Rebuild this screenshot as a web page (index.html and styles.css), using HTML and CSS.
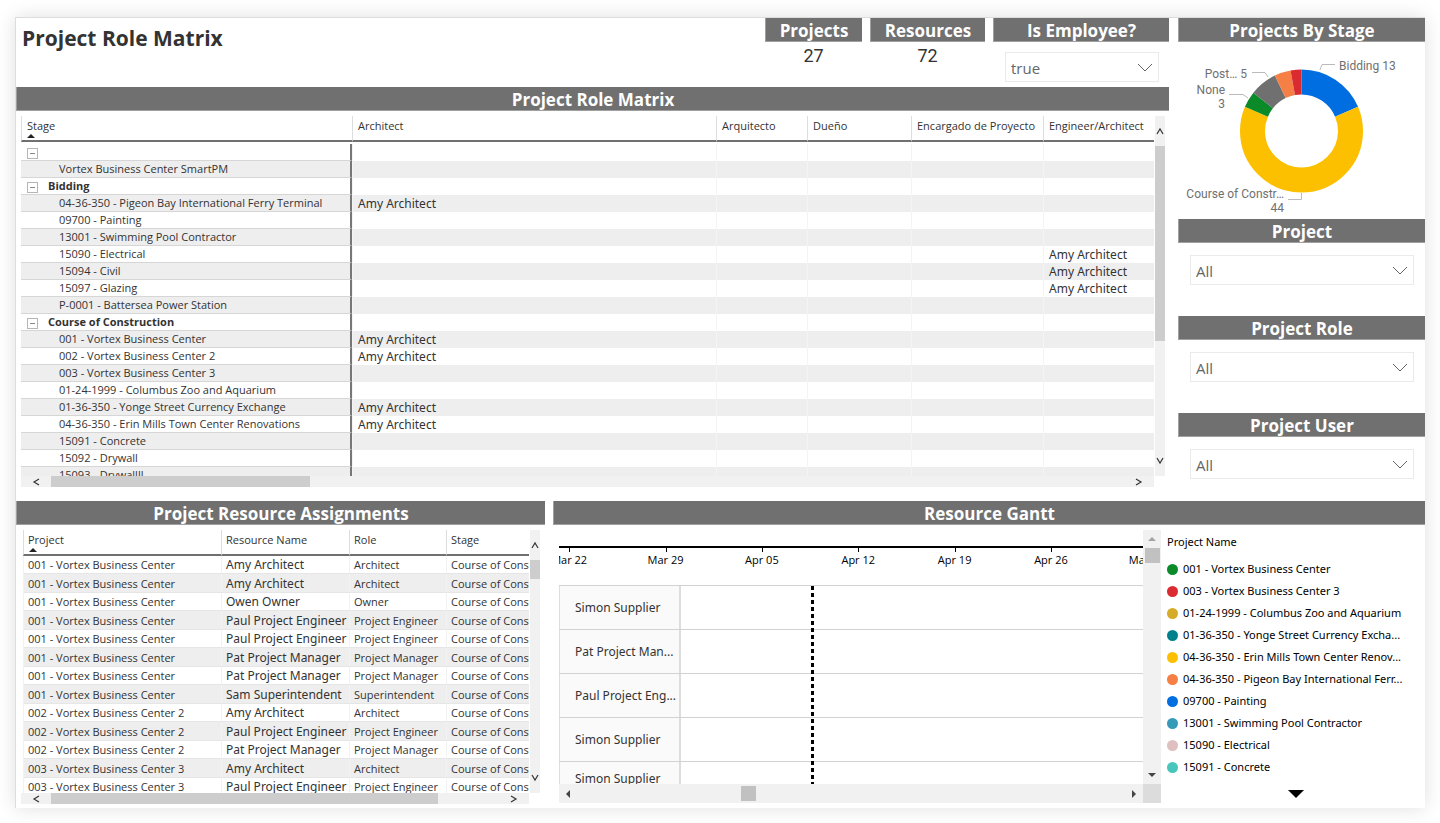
FILE: index.html
```
<!DOCTYPE html>
<html lang="en">
<head>
<meta charset="utf-8">
<title>Project Role Matrix</title>
<link rel="stylesheet" href="styles.css">
</head>
<body>
<main class="dashboard">
  <section class="upper">
    <div class="primary">
      <header class="topbar">
        <h1 class="page-title">Project Role Matrix</h1>
        <div class="kpi kpi-projects"><h2 class="bar">Projects</h2><p class="kpi-value">27</p></div>
        <div class="kpi kpi-resources"><h2 class="bar">Resources</h2><p class="kpi-value">72</p></div>
        <div class="kpi kpi-employee">
          <h2 class="bar"><label for="employee">Is Employee?</label></h2>
          <div class="picker"><select id="employee"><option>true</option><option>false</option></select><svg viewBox="0 0 16 9"><path d="M1 1l7 7 7-7"/></svg></div>
        </div>
      </header>
      <section class="matrix">
        <h2 class="bar">Project Role Matrix</h2>
        <div class="pane matrix-pane">
          <div class="clip">
            <table class="matrix-table">
              <colgroup><col class="m-stage"><col><col class="m-arq"><col class="m-due"><col class="m-enc"><col class="m-eng"></colgroup>
              <thead><tr><th>Stage<svg class="sort" viewBox="0 0 8 4"><path d="M0 4L4 0l4 4z"/></svg></th><th>Architect</th><th>Arquitecto</th><th>Dueño</th><th>Encargado de Proyecto</th><th>Engineer/Architect</th></tr></thead>
              <tbody>
                <tr class="group"><th><button class="toggle" aria-label="Collapse"></button></th><td></td><td></td><td></td><td></td><td></td></tr>
                <tr><th>Vortex Business Center SmartPM</th><td></td><td></td><td></td><td></td><td></td></tr>
                <tr class="group"><th><button class="toggle" aria-label="Collapse Bidding"></button>Bidding</th><td></td><td></td><td></td><td></td><td></td></tr>
                <tr><th>04-36-350 - Pigeon Bay International Ferry Terminal</th><td>Amy Architect</td><td></td><td></td><td></td><td></td></tr>
                <tr><th>09700 - Painting</th><td></td><td></td><td></td><td></td><td></td></tr>
                <tr><th>13001 - Swimming Pool Contractor</th><td></td><td></td><td></td><td></td><td></td></tr>
                <tr><th>15090 - Electrical</th><td></td><td></td><td></td><td></td><td>Amy Architect</td></tr>
                <tr><th>15094 - Civil</th><td></td><td></td><td></td><td></td><td>Amy Architect</td></tr>
                <tr><th>15097 - Glazing</th><td></td><td></td><td></td><td></td><td>Amy Architect</td></tr>
                <tr><th>P-0001 - Battersea Power Station</th><td></td><td></td><td></td><td></td><td></td></tr>
                <tr class="group"><th><button class="toggle" aria-label="Collapse Course of Construction"></button>Course of Construction</th><td></td><td></td><td></td><td></td><td></td></tr>
                <tr><th>001 - Vortex Business Center</th><td>Amy Architect</td><td></td><td></td><td></td><td></td></tr>
                <tr><th>002 - Vortex Business Center 2</th><td>Amy Architect</td><td></td><td></td><td></td><td></td></tr>
                <tr><th>003 - Vortex Business Center 3</th><td></td><td></td><td></td><td></td><td></td></tr>
                <tr><th>01-24-1999 - Columbus Zoo and Aquarium</th><td></td><td></td><td></td><td></td><td></td></tr>
                <tr><th>01-36-350 - Yonge Street Currency Exchange</th><td>Amy Architect</td><td></td><td></td><td></td><td></td></tr>
                <tr><th>04-36-350 - Erin Mills Town Center Renovations</th><td>Amy Architect</td><td></td><td></td><td></td><td></td></tr>
                <tr><th>15091 - Concrete</th><td></td><td></td><td></td><td></td><td></td></tr>
                <tr><th>15092 - Drywall</th><td></td><td></td><td></td><td></td><td></td></tr>
                <tr><th>15093 - Drywallll</th><td></td><td></td><td></td><td></td><td></td></tr>
              </tbody>
            </table>
          </div>
          <div class="vscroll">
            <button aria-label="Scroll up"><svg viewBox="0 0 8 8"><path d="M1 7l3-5 3 5"/></svg></button>
            <span class="thumb"></span>
            <button class="end" aria-label="Scroll down"><svg viewBox="0 0 8 8"><path d="M1 1l3 5 3-5"/></svg></button>
          </div>
          <div class="hscroll">
            <button aria-label="Scroll left"><svg viewBox="0 0 8 8"><path d="M7 1L2 4l5 3"/></svg></button>
            <span class="thumb"></span>
            <button class="end" aria-label="Scroll right"><svg viewBox="0 0 8 8"><path d="M1 1l5 3-5 3"/></svg></button>
          </div>
        </div>
      </section>
    </div>
    <aside class="sidebar">
      <section>
        <h2 class="bar">Projects By Stage</h2>
        <svg class="donut" viewBox="0 0 247 177" role="img" aria-label="Projects by stage">
          <g class="slices" transform="rotate(-90 123.5 89)">
            <circle class="blue" cx="123.5" cy="89" r="49" pathLength="70" stroke-dasharray="13 57"/>
            <circle class="yellow" cx="123.5" cy="89" r="49" pathLength="70" stroke-dasharray="44 26" stroke-dashoffset="-13"/>
            <circle class="green" cx="123.5" cy="89" r="49" pathLength="70" stroke-dasharray="3 67" stroke-dashoffset="-57"/>
            <circle class="grey" cx="123.5" cy="89" r="49" pathLength="70" stroke-dasharray="5 65" stroke-dashoffset="-60"/>
            <circle class="orange" cx="123.5" cy="89" r="49" pathLength="70" stroke-dasharray="3 67" stroke-dashoffset="-65"/>
            <circle class="red" cx="123.5" cy="89" r="49" pathLength="70" stroke-dasharray="2 68" stroke-dashoffset="-68"/>
          </g>
          <path class="leader" d="M142 28l2-5.500h13M90 35l-3-4.500H74M70 56l-5-3.500H51M123.500 151v6.500H110"/>
          <text x="161" y="28">Bidding 13</text>
          <g text-anchor="end">
            <text x="69" y="36">Post… 5</text>
            <text x="47" y="52">None</text><text x="47" y="66">3</text>
            <text x="106" y="156">Course of Constr…</text><text x="106" y="170">44</text>
          </g>
        </svg>
      </section>
      <section class="filter"><h2 class="bar"><label for="project">Project</label></h2><div class="picker"><select id="project"><option>All</option></select><svg viewBox="0 0 16 9"><path d="M1 1l7 7 7-7"/></svg></div></section>
      <section class="filter"><h2 class="bar"><label for="role">Project Role</label></h2><div class="picker"><select id="role"><option>All</option></select><svg viewBox="0 0 16 9"><path d="M1 1l7 7 7-7"/></svg></div></section>
      <section class="filter"><h2 class="bar"><label for="user">Project User</label></h2><div class="picker"><select id="user"><option>All</option></select><svg viewBox="0 0 16 9"><path d="M1 1l7 7 7-7"/></svg></div></section>
    </aside>
  </section>

  <section class="lower">
    <section class="assignments">
      <h2 class="bar">Project Resource Assignments</h2>
      <div class="pane assign-pane">
        <div class="clip">
          <table class="assign-table">
            <colgroup><col class="a-project"><col class="a-name"><col class="a-role"><col></colgroup>
            <thead><tr><th>Project<svg class="sort" viewBox="0 0 8 4"><path d="M0 4L4 0l4 4z"/></svg></th><th>Resource Name</th><th>Role</th><th>Stage</th></tr></thead>
            <tbody>
              <tr><td>001 - Vortex Business Center</td><td>Amy Architect</td><td>Architect</td><td>Course of Construction</td></tr>
              <tr><td>001 - Vortex Business Center</td><td>Amy Architect</td><td>Architect</td><td>Course of Construction</td></tr>
              <tr><td>001 - Vortex Business Center</td><td>Owen Owner</td><td>Owner</td><td>Course of Construction</td></tr>
              <tr><td>001 - Vortex Business Center</td><td>Paul Project Engineer</td><td>Project Engineer</td><td>Course of Construction</td></tr>
              <tr><td>001 - Vortex Business Center</td><td>Paul Project Engineer</td><td>Project Engineer</td><td>Course of Construction</td></tr>
              <tr><td>001 - Vortex Business Center</td><td>Pat Project Manager</td><td>Project Manager</td><td>Course of Construction</td></tr>
              <tr><td>001 - Vortex Business Center</td><td>Pat Project Manager</td><td>Project Manager</td><td>Course of Construction</td></tr>
              <tr><td>001 - Vortex Business Center</td><td>Sam Superintendent</td><td>Superintendent</td><td>Course of Construction</td></tr>
              <tr><td>002 - Vortex Business Center 2</td><td>Amy Architect</td><td>Architect</td><td>Course of Construction</td></tr>
              <tr><td>002 - Vortex Business Center 2</td><td>Paul Project Engineer</td><td>Project Engineer</td><td>Course of Construction</td></tr>
              <tr><td>002 - Vortex Business Center 2</td><td>Pat Project Manager</td><td>Project Manager</td><td>Course of Construction</td></tr>
              <tr><td>003 - Vortex Business Center 3</td><td>Amy Architect</td><td>Architect</td><td>Course of Construction</td></tr>
              <tr><td>003 - Vortex Business Center 3</td><td>Paul Project Engineer</td><td>Project Engineer</td><td>Course of Construction</td></tr>
            </tbody>
          </table>
        </div>
        <div class="vscroll">
          <button aria-label="Scroll up"><svg viewBox="0 0 8 8"><path d="M1 7l3-5 3 5"/></svg></button>
          <span class="thumb"></span>
          <button class="end" aria-label="Scroll down"><svg viewBox="0 0 8 8"><path d="M1 1l3 5 3-5"/></svg></button>
        </div>
        <div class="hscroll">
          <button aria-label="Scroll left"><svg viewBox="0 0 8 8"><path d="M7 1L2 4l5 3"/></svg></button>
          <span class="thumb"></span>
          <button class="end" aria-label="Scroll right"><svg viewBox="0 0 8 8"><path d="M1 1l5 3-5 3"/></svg></button>
        </div>
      </div>
    </section>

    <section class="gantt">
      <h2 class="bar">Resource Gantt</h2>
      <div class="gantt-body">
        <div class="gantt-pane">
          <div class="clip chart">
            <div class="axis"><span>Mar 22</span><span>Mar 29</span><span>Apr 05</span><span>Apr 12</span><span>Apr 19</span><span>Apr 26</span><span>May 03</span></div>
            <div class="lanes">
              <div class="lane"><span>Simon Supplier</span></div>
              <div class="lane"><span>Pat Project Man...</span></div>
              <div class="lane"><span>Paul Project Eng...</span></div>
              <div class="lane"><span>Simon Supplier</span></div>
              <div class="lane short"><span>Simon Supplier</span></div>
              <svg class="today" aria-hidden="true"><line x1="1.500" y1="1" x2="1.500" y2="400"/></svg>
            </div>
          </div>
          <div class="vscroll solid">
            <button class="dim" aria-label="Scroll up"><svg viewBox="0 0 8 8"><path d="M0 6l4-4 4 4z"/></svg></button>
            <span class="thumb"></span>
            <button class="end" aria-label="Scroll down"><svg viewBox="0 0 8 8"><path d="M0 2l4 4 4-4z"/></svg></button>
          </div>
          <div class="hscroll solid">
            <button aria-label="Scroll left"><svg viewBox="0 0 8 8"><path d="M6 0L2 4l4 4z"/></svg></button>
            <span class="thumb"></span>
            <button class="end" aria-label="Scroll right"><svg viewBox="0 0 8 8"><path d="M2 0l4 4-4 4z"/></svg></button>
          </div>
          <div class="corner"></div>
        </div>
        <div class="legend">
          <h3>Project Name</h3>
          <ul>
            <li><i class="c-green"></i>001 - Vortex Business Center</li>
            <li><i class="c-red"></i>003 - Vortex Business Center 3</li>
            <li><i class="c-gold"></i>01-24-1999 - Columbus Zoo and Aquarium</li>
            <li><i class="c-teal"></i>01-36-350 - Yonge Street Currency Excha...</li>
            <li><i class="c-yellow"></i>04-36-350 - Erin Mills Town Center Renov...</li>
            <li><i class="c-orange"></i>04-36-350 - Pigeon Bay International Ferr...</li>
            <li><i class="c-blue"></i>09700 - Painting</li>
            <li><i class="c-sky"></i>13001 - Swimming Pool Contractor</li>
            <li><i class="c-pink"></i>15090 - Electrical</li>
            <li><i class="c-aqua"></i>15091 - Concrete</li>
          </ul>
          <button class="more" aria-label="More projects"><svg viewBox="0 0 16 8"><path d="M0 0h16L8 8z"/></svg></button>
        </div>
      </div>
    </section>
  </section>
</main>
</body>
</html>
```
FILE: styles.css
```
* { box-sizing: border-box; }
body { margin: 0; background: #fff; color: #333; font-family: "Open Sans", "Noto Sans", sans-serif; font-size: 11px; line-height: 16px; }
h1, h2, h3, p, ul { margin: 0; padding: 0; }
ul { list-style: none; }
button { display: flex; align-items: center; justify-content: center; padding: 0; border: 0; background: none; }

.dashboard { margin: 17px 15px 15px; padding-bottom: 4px; border: 1px solid #ddd; border-right: 0; border-bottom: 0; background: #fff; box-shadow: 0 0 18px rgba(0, 0, 0, 0.13); }
.bar { height: 24px; border-left: 1px solid #a0a0a0; border-bottom: 1px solid #a0a0a0; background: #707070; color: #fff; font-size: 17px; font-weight: 700; line-height: 25px; text-align: center; white-space: nowrap; }

.upper { display: grid; grid-template-columns: minmax(0, 1fr) 247px; column-gap: 9px; }
.topbar { display: flex; gap: 8px; height: 69px; }
.page-title { flex: 1; padding: 3px 6px; font-size: 21px; line-height: 34px; font-weight: 700; color: #333; }
.kpi-projects { width: 97px; }
.kpi-resources { width: 115px; }
.kpi-employee { width: 176px; }
.kpi-value { padding-top: 2px; font-family: Roboto, sans-serif; font-size: 18px; line-height: 24px; text-align: center; }
.kpi-employee .picker { margin: 10px 10px 0 12px; }

.picker { display: grid; height: 30px; }
.picker select, .picker svg { grid-area: 1 / 1; }
.picker select { width: 100%; padding: 2px 5px 0; border: 1px solid #eaeaea; border-radius: 0; background: #fff; appearance: none; color: #666; font-family: inherit; font-size: 15px; }
.picker svg { width: 16px; height: 9px; margin-right: 6px; place-self: center end; fill: none; stroke: #666; pointer-events: none; }

.pane { display: grid; grid-template-columns: minmax(0, 1fr) 10px; column-gap: 1px; padding: 5px 4px 0 5px; }
.matrix-pane { grid-template-rows: 360px 11px; }
.clip { overflow: hidden; }
table { width: 100%; table-layout: fixed; border-collapse: separate; border-spacing: 0; }
th, td { overflow: hidden; padding: 0 5px; font-weight: 400; text-align: left; white-space: nowrap; }
thead th { position: relative; border-left: 1px solid #ddd; border-bottom: 2px solid #707070; vertical-align: top; }
.sort { position: absolute; left: 5px; bottom: 2px; width: 8px; height: 4px; fill: #222; }

.m-stage { width: 331px; }
.m-arq { width: 91px; }
.m-due { width: 104px; }
.m-enc { width: 132px; }
.m-eng { width: 111px; }
.matrix-table thead th { height: 26px; padding-top: 2px; }
.matrix-table tbody::before { display: table-row; height: 2px; content: ""; }
.matrix-table tbody th, .matrix-table tbody td { height: 17px; line-height: 16px; }
.matrix-table tbody th { padding-left: 38px; border-right: 2px solid #777; border-bottom: 1px solid #d6d6d6; }
.matrix-table tbody td { border-left: 1px solid #f4f4f4; font-family: "Noto Sans", sans-serif; font-size: 12px; }
.matrix-table tbody tr:nth-child(even) { background: #eee; }
.matrix-table .group th { padding-left: 6px; font-weight: 700; }
.toggle { position: relative; display: inline-block; width: 11px; height: 11px; margin: 4px 10px 0 0; border: 1px solid #b5b5b5; vertical-align: top; }
.toggle::before { position: absolute; top: 4px; left: 2px; width: 5px; height: 1px; background: #888; content: ""; }

.vscroll { display: flex; flex-direction: column; background: #f1f1f1; }
.hscroll { display: flex; background: #f1f1f1; }
.vscroll button { height: 30px; }
.hscroll button { width: 30px; }
.vscroll svg, .hscroll svg { width: 8px; height: 8px; fill: none; stroke: #333; stroke-width: 1.200; }
.thumb { background: #cdcdcd; }
.vscroll .end { margin-top: auto; }
.hscroll .end { margin-left: auto; }
.matrix-pane .vscroll .thumb { height: 195px; }
.matrix-pane .hscroll .thumb { width: 259px; }

.donut { display: block; width: 100%; height: 177px; }
.donut text { fill: #707070; font-family: Roboto, sans-serif; font-size: 12px; }
.slices circle { fill: none; stroke-width: 25; }
.leader { fill: none; stroke: #bbb; }
.blue { stroke: #006ee0; }
.yellow { stroke: #fcc000; }
.green { stroke: #0a8a28; }
.grey { stroke: #707070; }
.orange { stroke: #f57f44; }
.red { stroke: #d92b30; }
.filter { padding-bottom: 31px; }
.filter:last-child { padding-bottom: 0; }
.filter .bar { line-height: 26px; }
.filter .picker { margin: 12px 11px 0 12px; }

.lower { display: grid; grid-template-columns: 529px minmax(0, 1fr); column-gap: 8px; padding-top: 14px; }
.assign-pane { grid-template-rows: 263px 11px; padding-left: 5px; padding-right: 5px; }
.assign-pane .clip { padding-left: 2px; }
.a-project { width: 198px; }
.a-name { width: 128px; }
.a-role { width: 97px; }
.assign-table thead th { height: 26px; padding: 2px 4px 0; }
.assign-table tbody td { height: 18px; padding: 0 4px; line-height: 17px; border-left: 1px solid #f2f2f2; border-bottom: 1px solid #e6e6e6; }
.assign-table tbody tr:nth-child(even) td { height: 19px; background: #eee; }
.assign-table tbody td:nth-child(2) { padding-right: 0; font-family: "Noto Sans", sans-serif; font-size: 12px; }
.assign-table td:last-child { padding-right: 0; text-overflow: clip; }
.assign-pane .vscroll .thumb { height: 19px; }
.assign-pane .hscroll .thumb { width: 387px; }

.gantt-body { display: grid; grid-template-columns: minmax(0, 1fr) 264px; padding: 5px 0 0 6px; }
.gantt-pane { display: grid; grid-template-columns: minmax(0, 1fr) 18px; grid-template-rows: 254px 19px; }
.axis { display: flex; height: 55px; padding-top: 16px; background: linear-gradient(#000, #000) 0 16px / 100% 2px no-repeat; color: #000; }
.axis span { position: relative; flex: 0 0 16.500%; padding-top: 6px; text-align: center; }
.axis span:first-child { margin-left: -38px; }
.axis span::before { position: absolute; top: 0; left: 50%; width: 1px; height: 6px; background: #000; content: ""; }
.lanes { position: relative; }
.lane { display: flex; height: 44px; border-top: 1px solid #d2d2d2; }
.lane span { display: flex; align-items: center; width: 122px; padding-left: 15px; border-left: 1px solid #ddd; border-right: 2px solid #ddd; background: #fafafa; font-family: "Noto Sans", sans-serif; font-size: 12px; white-space: nowrap; }
.short { height: 34px; }
.today { position: absolute; top: 0; left: 252px; width: 3px; height: 100%; }
.today line { stroke: #000; stroke-width: 3; stroke-dasharray: 4 3; }
.solid { align-items: center; }
.solid button { width: 18px; height: 18px; }
.solid svg { fill: #444; stroke: none; }
.solid .dim svg { fill: #a3a3a3; }
.solid .thumb { width: 15px; height: 15px; background: #c1c1c1; }
.hscroll.solid .thumb { margin-left: 28%; }
.corner { background: #dcdcdc; }

.legend { padding: 4px 0 0 6px; color: #000; font-family: "Noto Sans", sans-serif; }
.legend h3 { margin-bottom: 8px; font-size: 11px; font-weight: 400; }
.legend li { display: flex; align-items: center; gap: 5px; height: 22px; white-space: nowrap; }
.legend i { width: 11px; height: 11px; border-radius: 50%; }
.more { width: 100%; height: 25px; align-items: flex-end; padding-bottom: 5px; }
.more svg { width: 16px; height: 8px; }
.c-green { background: #0a8a28; }
.c-red { background: #d92b30; }
.c-gold { background: #d6ab28; }
.c-teal { background: #00828c; }
.c-yellow { background: #fcc000; }
.c-orange { background: #f57f44; }
.c-blue { background: #006ee0; }
.c-sky { background: #3599b8; }
.c-pink { background: #dfbfbf; }
.c-aqua { background: #4ac5bb; }
```
